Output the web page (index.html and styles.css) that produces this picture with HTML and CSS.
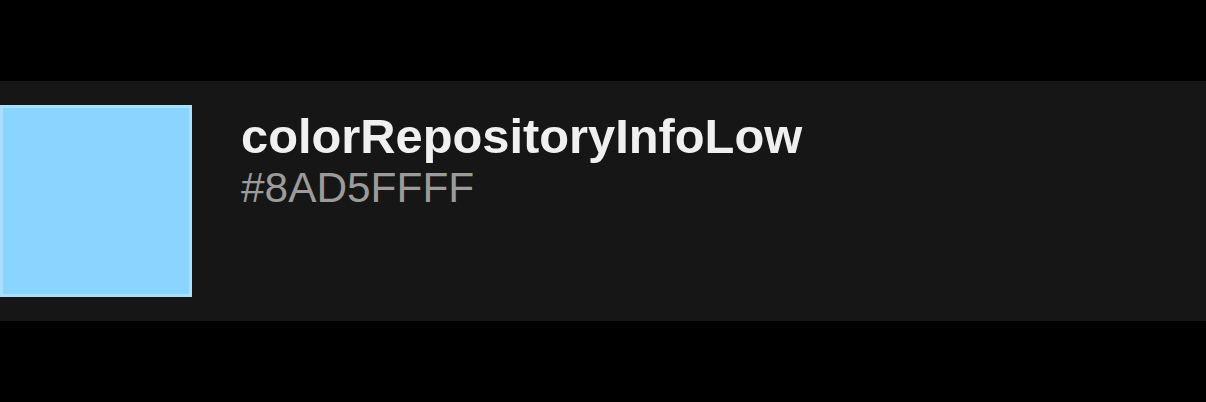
FILE: index.html
```html
<!DOCTYPE html>
<html>
<head>
<meta charset="utf-8">
<link rel="stylesheet" href="styles.css">
</head>
<body>
  <div class="row">
    <div class="swatch"></div>
    <div class="info">
      <div class="name">colorRepositoryInfoLow</div>
      <div class="value">#8AD5FFFF</div>
    </div>
  </div>
</body>
</html>
```

FILE: styles.css
```css
html, body {
  margin: 0;
  padding: 0;
  background: #000;
  width: 1206px;
  height: 402px;
  overflow: hidden;
}
body {
  font-family: "Liberation Sans", Arial, sans-serif;
}
.row {
  margin-top: 81px;
  height: 240px;
  background: #161616;
  display: flex;
  align-items: flex-start;
  padding-top: 24px;
  box-sizing: border-box;
  gap: 49px;
}
.swatch {
  width: 192px;
  height: 192px;
  box-sizing: border-box;
  background: #8ad5ff;
  border: 3px solid #a9e0ff;
  flex: none;
}
.info {
  display: flex;
  flex-direction: column;
  padding-top: 3px;
}
.name {
  font-size: 48.8px;
  line-height: 56px;
  font-weight: bold;
  color: #f0f0f0;
}
.value {
  font-size: 42.4px;
  line-height: 48px;
  color: #9b9b9b;
}
```
